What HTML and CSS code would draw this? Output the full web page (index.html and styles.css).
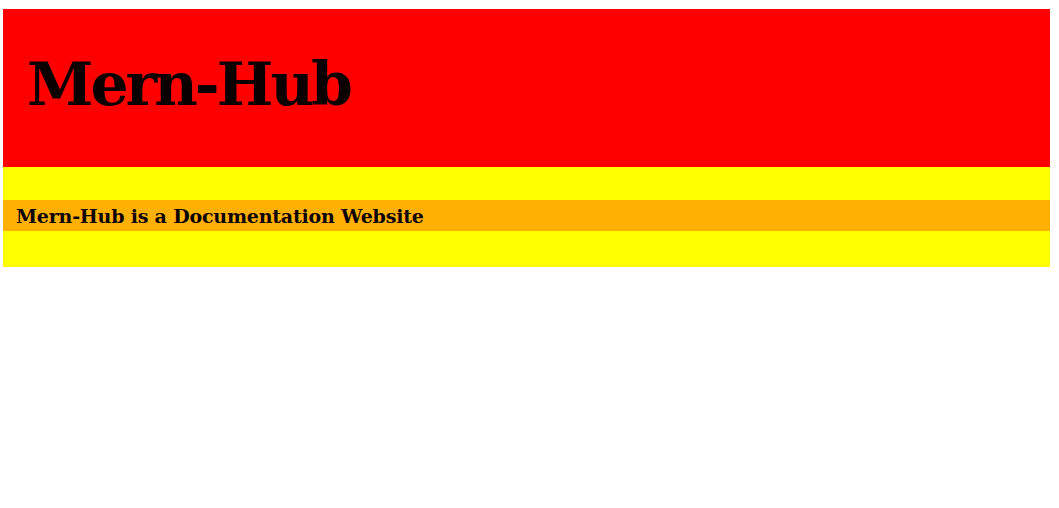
FILE: index.html
```html
<!DOCTYPE html>
<html lang="en">
<head>
<meta charset="utf-8">
<title>Mern-Hub</title>
<link rel="stylesheet" href="styles.css">
</head>
<body>
  <header class="hero">
    <h1 class="hero-title">Mern-Hub</h1>
  </header>
  <section class="intro">
    <p class="intro-band">Mern-Hub is a Documentation Website</p>
  </section>
</body>
</html>
```

FILE: styles.css
```css
html, body {
  background: #ffffff;
}
body {
  margin: 9px 9px 0 3px;
  font-family: "DejaVu Serif", "Liberation Serif", serif;
}
.hero {
  background: #ff0000;
  height: 158px;
  display: flex;
  align-items: center;
  padding: 0 0 8px 24px;
  box-sizing: border-box;
}
.hero-title {
  margin: 0;
  font-size: 60px;
  font-weight: bold;
  color: #0a0000;
  line-height: 1;
  letter-spacing: -3px;
}
.intro {
  background: #ffff00;
  padding: 33px 0 36px;
}
.intro-band {
  margin: 0;
  background: #ffb000;
  height: 31px;
  display: flex;
  align-items: center;
  padding-left: 13px;
  font-size: 19px;
  font-weight: bold;
  color: #0a0000;
  letter-spacing: -0.2px;
}
```
